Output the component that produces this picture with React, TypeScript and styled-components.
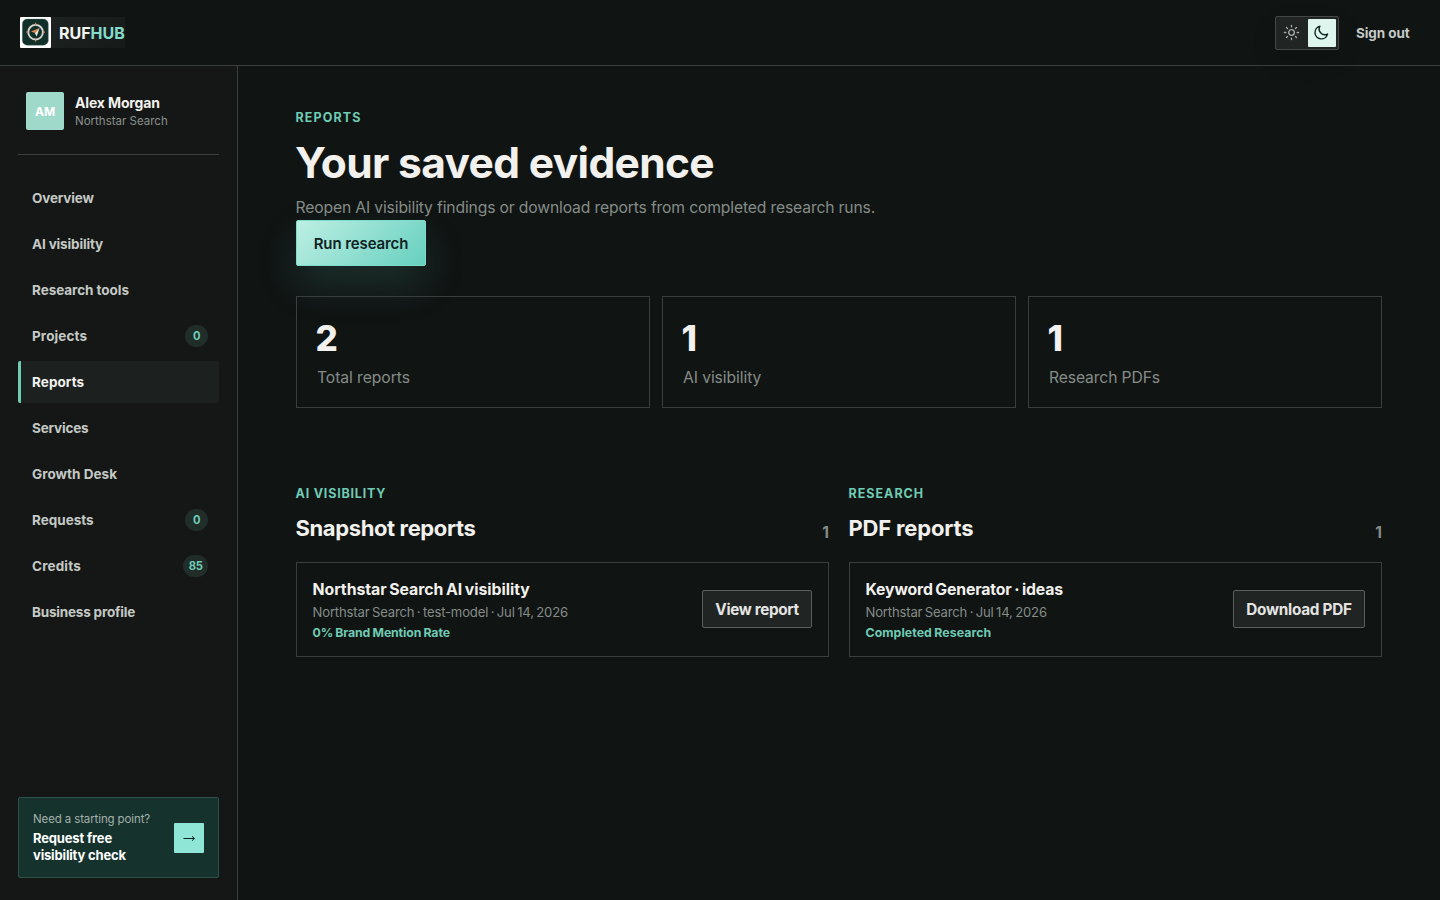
import React from "react";
import styled, { createGlobalStyle, css } from "styled-components";

const mint = "#6fcbb3";

const GlobalStyle = createGlobalStyle`
  *, *::before, *::after { box-sizing: border-box; }
  body {
    margin: 0;
    background: #101413;
    color: #f2f1ed;
    font-family: Inter, "Liberation Sans", sans-serif;
    font-size: 15px;
    overflow: hidden;
  }
  h1, h2, h3, p { margin: 0; }
  button { font-family: inherit; cursor: pointer; }
  a { color: inherit; text-decoration: none; }
`;

type Tracked = { $track?: number };
const tracking = css<Tracked>`
  letter-spacing: ${(p) => p.$track ?? 0}px;
  white-space: nowrap;
`;

const Page = styled.div`
  display: flex;
  flex-direction: column;
  height: 100vh;
`;

const Header = styled.header`
  display: flex;
  align-items: center;
  justify-content: space-between;
  flex: none;
  height: 66px;
  padding: 0 30px 0 20px;
  border-bottom: 1px solid #3a3f3d;
`;

const Brand = styled.a`
  display: flex;
  align-items: center;
  gap: 8px;
  width: 105px;
  height: 31px;
  background: linear-gradient(135deg, #202423, #161a19);
  svg { flex: none; display: block; }
`;

const BrandName = styled.span<Tracked>`
  font-size: 16px;
  font-weight: 700;
  color: #f2f5f2;
  ${tracking}
  em { font-style: normal; color: #83dccb; }
`;

const HeaderActions = styled.div`
  display: flex;
  align-items: center;
  gap: 17px;
`;

const ThemeSwitch = styled.div`
  display: flex;
  gap: 2px;
  padding: 2px;
  border: 1px solid #434746;
  border-radius: 2px;
  background: #202423;
  box-shadow: 0 10px 24px rgba(0, 0, 0, 0.12);
`;

const ThemeOption = styled.button<{ $active?: boolean }>`
  display: grid;
  place-items: center;
  width: 28px;
  height: 28px;
  padding: 0 1px 1px 0;
  border: 0;
  border-radius: 1px;
  color: ${(p) => (p.$active ? "#10221f" : "#a5aaa7")};
  background: ${(p) => (p.$active ? "#def5ed" : "transparent")};
`;

const SignOut = styled.a<Tracked>`
  width: 54px;
  font-size: 13.5px;
  font-weight: 700;
  color: #c5c9c5;
  ${tracking}
`;

const Body = styled.div`
  display: flex;
  flex: 1;
  min-height: 0;
`;

const Sidebar = styled.aside`
  display: flex;
  flex-direction: column;
  flex: none;
  width: 238px;
  padding: 26px 18px 22px;
  border-right: 1px solid #3a3f3d;
  background: #141716;
`;

const Profile = styled.div`
  display: flex;
  gap: 11px;
  height: 63px;
  padding: 0 8px;
  border-bottom: 1px solid #3a3f3d;
`;

const Avatar = styled.div`
  display: grid;
  place-items: center;
  width: 38px;
  height: 38px;
  border-radius: 2px;
  background: #9fd9ca;
  color: #fff;
  font-size: 12px;
  font-weight: 700;
`;

const ProfileName = styled.div<Tracked>`
  padding: 2px 0 1px;
  font-size: 14px;
  line-height: 17px;
  font-weight: 700;
  ${tracking}
`;

const ProfileOrg = styled.div<Tracked>`
  font-size: 11.5px;
  line-height: 18px;
  color: #8b918d;
  ${tracking}
`;

const Nav = styled.nav`
  display: flex;
  flex-direction: column;
  gap: 4px;
  padding-top: 22px;
`;

const NavLink = styled.a<{ $active?: boolean }>`
  display: flex;
  align-items: center;
  justify-content: space-between;
  height: 42px;
  padding: 0 11px;
  border-left: 3px solid ${(p) => (p.$active ? mint : "transparent")};
  border-radius: 2px;
  background: ${(p) => (p.$active ? "#1c211f" : "transparent")};
  color: ${(p) => (p.$active ? "#f2f1ed" : "#c5c9c5")};
  font-size: 13.5px;
  font-weight: 700;
`;

const NavLabel = styled.span<Tracked>`
  ${tracking}
`;

const Count = styled.span`
  display: grid;
  place-items: center;
  min-width: 23px;
  height: 22px;
  padding: 0 5.5px;
  border-radius: 11px;
  background: #202d29;
  color: ${mint};
  font-size: 11.2px;
  font-weight: 700;
  letter-spacing: -0.3px;
`;

const Prompt = styled.a`
  display: flex;
  align-items: center;
  justify-content: space-between;
  height: 81px;
  margin-top: auto;
  padding: 0 14px;
  border: 1px solid #2f5149;
  border-radius: 2px;
  background: #15322d;
`;

const PromptCopy = styled.div`
  padding-bottom: 2px;
`;

const PromptHint = styled.div<Tracked>`
  font-size: 11.5px;
  line-height: 18px;
  color: #a3b0ab;
  ${tracking}
`;

const PromptTitle = styled.div<Tracked>`
  padding-top: 2px;
  font-size: 13px;
  line-height: 17px;
  font-weight: 700;
  color: #fff;
  ${tracking}
`;

const PromptArrow = styled.span`
  display: grid;
  place-items: center;
  width: 30px;
  height: 30px;
  border-radius: 1px;
  background: #8fe5d6;
  color: #10221f;
`;

const Main = styled.main`
  flex: 1;
  padding: 42px 58px 0;
`;

const Eyebrow = styled.p<Tracked>`
  margin-left: -0.5px;
  font-size: 12.5px;
  line-height: 20px;
  font-weight: 700;
  color: ${mint};
  ${tracking}
`;

const PageTitle = styled.h1<Tracked>`
  margin-left: -1px;
  padding-top: 11px;
  font-size: 42.5px;
  line-height: 48px;
  font-weight: 700;
  ${tracking}
`;

const Intro = styled.p<Tracked>`
  margin-left: -0.5px;
  padding-top: 9px;
  font-size: 15.7px;
  line-height: 24px;
  font-weight: 400;
  color: #858c88;
  ${tracking}
`;

const RunButton = styled.button<Tracked>`
  display: block;
  width: 130px;
  height: 46px;
  padding: 1px 0 0;
  border: 1px solid #7fdccb;
  border-radius: 2px;
  background: linear-gradient(135deg, #bdefe3, #66d0bf);
  box-shadow: 0 18px 42px rgba(102, 208, 191, 0.16);
  color: #10221f;
  font-size: 15px;
  font-weight: 600;
  ${tracking}
`;

const Stats = styled.section`
  display: grid;
  grid-template-columns: repeat(3, 1fr);
  gap: 12px;
  margin-top: 30px;
`;

const Stat = styled.div`
  height: 112px;
  padding: 21px 20px 0;
  border: 1px solid #3a3f3d;
`;

const StatValue = styled.div<Tracked>`
  margin-left: -1.5px;
  font-size: 35px;
  line-height: 40px;
  font-weight: 800;
  ${tracking}
`;

const StatLabel = styled.div<Tracked>`
  padding-top: 8px;
  font-size: 15.7px;
  line-height: 24px;
  font-weight: 400;
  color: #858c88;
  ${tracking}
`;

const Groups = styled.div`
  display: grid;
  grid-template-columns: 1fr 1fr;
  gap: 20px;
  margin-top: 76px;
`;

const GroupHead = styled.div`
  display: flex;
  align-items: flex-end;
  justify-content: space-between;
  height: 61px;
`;

const GroupTitle = styled.h2<Tracked>`
  margin-left: -0.5px;
  padding: 10px 0 2px;
  font-size: 22px;
  line-height: 29px;
  font-weight: 700;
  ${tracking}
`;

const GroupTotal = styled.span`
  font-size: 15.5px;
  line-height: 24px;
  font-weight: 700;
  color: #858c88;
`;

const Report = styled.article`
  display: flex;
  align-items: center;
  justify-content: space-between;
  height: 95px;
  margin-top: 17px;
  padding: 0 16px;
  border: 1px solid #3a3f3d;
`;

const ReportCopy = styled.div`
  margin-left: -0.5px;
  padding-top: 2px;
  word-spacing: -1px;
`;

const ReportTitle = styled.h3<Tracked>`
  font-size: 15.8px;
  line-height: 24px;
  font-weight: 700;
  ${tracking}
`;

const ReportMeta = styled.p<Tracked>`
  font-size: 13.1px;
  line-height: 21px;
  font-weight: 400;
  color: #858c88;
  ${tracking}
`;

const ReportStatus = styled.p<Tracked>`
  font-size: 12.3px;
  line-height: 20px;
  font-weight: 700;
  color: ${mint};
  word-spacing: -0.5px;
  ${tracking}
`;

const ReportButton = styled.button<{ $width: number } & Tracked>`
  width: ${(p) => p.$width}px;
  height: 38px;
  margin-bottom: 1px;
  padding: 0;
  border: 1px solid #5a5e5c;
  border-radius: 2px;
  background: #202423;
  color: #e4e5e2;
  font-size: 15.3px;
  font-weight: 700;
  ${tracking}
`;

const LogoMark = () => (
  <svg width="31" height="31" viewBox="0 0 31 31">
    <rect width="31" height="31" rx="1" fill="#fff" />
    <rect x="2.3" y="2" width="26" height="26.3" rx="5" fill="#12302a" stroke="#5c7a73" strokeWidth="0.4" />
    <circle cx="15.6" cy="15.2" r="7.3" fill="none" stroke="#d9d6cf" strokeWidth="1.9" />
    <path d="M15.6 5.8v2.2M15.6 22.4v2.2M6.2 15.2h2.2M22.8 15.2h2.2" stroke="#c9855c" strokeWidth="1.3" />
    <path d="M19.6 11 16.6 19.6 14.9 16z" fill="#f3efe8" />
    <path d="M19.6 11 15 16.1 10.9 14.5z" fill="#e08a56" />
  </svg>
);

const SunIcon = () => (
  <svg width="17" height="17" viewBox="0 0 24 24" fill="none" stroke="currentColor" strokeWidth="1.9" strokeLinecap="round">
    <circle cx="12" cy="12" r="4" />
    <path d="M12 2v2M12 20v2M4.93 4.93l1.41 1.41M17.66 17.66l1.41 1.41M2 12h2M20 12h2M6.34 17.66l-1.41 1.41M19.07 4.93l-1.41 1.41" />
  </svg>
);

const MoonIcon = () => (
  <svg width="17" height="17" viewBox="0 0 24 24" fill="none" stroke="currentColor" strokeWidth="2" strokeLinejoin="round">
    <path d="M20.5 14.2A9 9 0 1 1 9.8 3.2a8 8 0 0 0 10.7 11z" />
  </svg>
);

const ArrowIcon = () => (
  <svg width="12" height="8" viewBox="0 0 12 8" fill="none" stroke="currentColor" strokeWidth="1">
    <path d="M.5 4.5h11M9 2.3l2.5 2.2L9 6.7" />
  </svg>
);

const navItems: { label: string; track: number; count?: number; active?: boolean }[] = [
  { label: "Overview", track: -0.16 },
  { label: "AI visibility", track: -0.14 },
  { label: "Research tools", track: -0.05 },
  { label: "Projects", track: 0.12, count: 0 },
  { label: "Reports", track: 0.07, active: true },
  { label: "Services", track: -0.18 },
  { label: "Growth Desk", track: 0.04 },
  { label: "Requests", track: 0, count: 0 },
  { label: "Credits", track: 0.16, count: 85 },
  { label: "Business profile", track: -0.19 },
];

const stats = [
  { value: 2, label: "Total reports", track: -0.07 },
  { value: 1, label: "AI visibility", track: -0.09 },
  { value: 1, label: "Research PDFs", track: -0.12 },
];

const groups = [
  {
    eyebrow: "AI VISIBILITY", eyebrowTrack: 0.8,
    title: "Snapshot reports", titleTrack: -0.38,
    name: "Northstar Search AI visibility", nameTrack: -0.04,
    meta: "Northstar Search · test-model · Jul 14, 2026", metaTrack: -0.17,
    status: "0% Brand Mention Rate", statusTrack: -0.12,
    action: "View report", actionTrack: -0.35, actionWidth: 110,
  },
  {
    eyebrow: "RESEARCH", eyebrowTrack: 1,
    title: "PDF reports", titleTrack: -0.17,
    name: "Keyword Generator · ideas", nameTrack: -0.15,
    meta: "Northstar Search · Jul 14, 2026", metaTrack: -0.18,
    status: "Completed Research", statusTrack: 0.07,
    action: "Download PDF", actionTrack: -0.25, actionWidth: 132,
  },
];

export default function App() {
  return (
    <>
      <GlobalStyle />
      <Page>
        <Header>
          <Brand href="#">
            <LogoMark />
            <BrandName $track={0}>RUF<em>HUB</em></BrandName>
          </Brand>
          <HeaderActions>
            <ThemeSwitch>
              <ThemeOption aria-label="Light theme"><SunIcon /></ThemeOption>
              <ThemeOption $active aria-label="Dark theme"><MoonIcon /></ThemeOption>
            </ThemeSwitch>
            <SignOut href="#" $track={-0.08}>Sign out</SignOut>
          </HeaderActions>
        </Header>
        <Body>
          <Sidebar>
            <Profile>
              <Avatar>AM</Avatar>
              <div>
                <ProfileName $track={-0.15}>Alex Morgan</ProfileName>
                <ProfileOrg $track={0}>Northstar Search</ProfileOrg>
              </div>
            </Profile>
            <Nav>
              {navItems.map((item) => (
                <NavLink key={item.label} href="#" $active={item.active}>
                  <NavLabel $track={item.track}>{item.label}</NavLabel>
                  {item.count !== undefined && <Count>{item.count}</Count>}
                </NavLink>
              ))}
            </Nav>
            <Prompt href="#">
              <PromptCopy>
                <PromptHint $track={-0.12}>Need a starting point?</PromptHint>
                <PromptTitle $track={-0.16}>Request free<br />visibility check</PromptTitle>
              </PromptCopy>
              <PromptArrow><ArrowIcon /></PromptArrow>
            </Prompt>
          </Sidebar>
          <Main>
            <Eyebrow $track={1.1}>REPORTS</Eyebrow>
            <PageTitle $track={-0.65}>Your saved evidence</PageTitle>
            <Intro $track={-0.15}>Reopen AI visibility findings or download reports from completed research runs.</Intro>
            <RunButton $track={-0.1}>Run research</RunButton>
            <Stats>
              {stats.map((s) => (
                <Stat key={s.label}>
                  <StatValue $track={-1}>{s.value}</StatValue>
                  <StatLabel $track={s.track}>{s.label}</StatLabel>
                </Stat>
              ))}
            </Stats>
            <Groups>
              {groups.map((g) => (
                <section key={g.title}>
                  <GroupHead>
                    <div>
                      <Eyebrow $track={g.eyebrowTrack}>{g.eyebrow}</Eyebrow>
                      <GroupTitle $track={g.titleTrack}>{g.title}</GroupTitle>
                    </div>
                    <GroupTotal>1</GroupTotal>
                  </GroupHead>
                  <Report>
                    <ReportCopy>
                      <ReportTitle $track={g.nameTrack}>{g.name}</ReportTitle>
                      <ReportMeta $track={g.metaTrack}>{g.meta}</ReportMeta>
                      <ReportStatus $track={g.statusTrack}>{g.status}</ReportStatus>
                    </ReportCopy>
                    <ReportButton $width={g.actionWidth} $track={g.actionTrack}>{g.action}</ReportButton>
                  </Report>
                </section>
              ))}
            </Groups>
          </Main>
        </Body>
      </Page>
    </>
  );
}
